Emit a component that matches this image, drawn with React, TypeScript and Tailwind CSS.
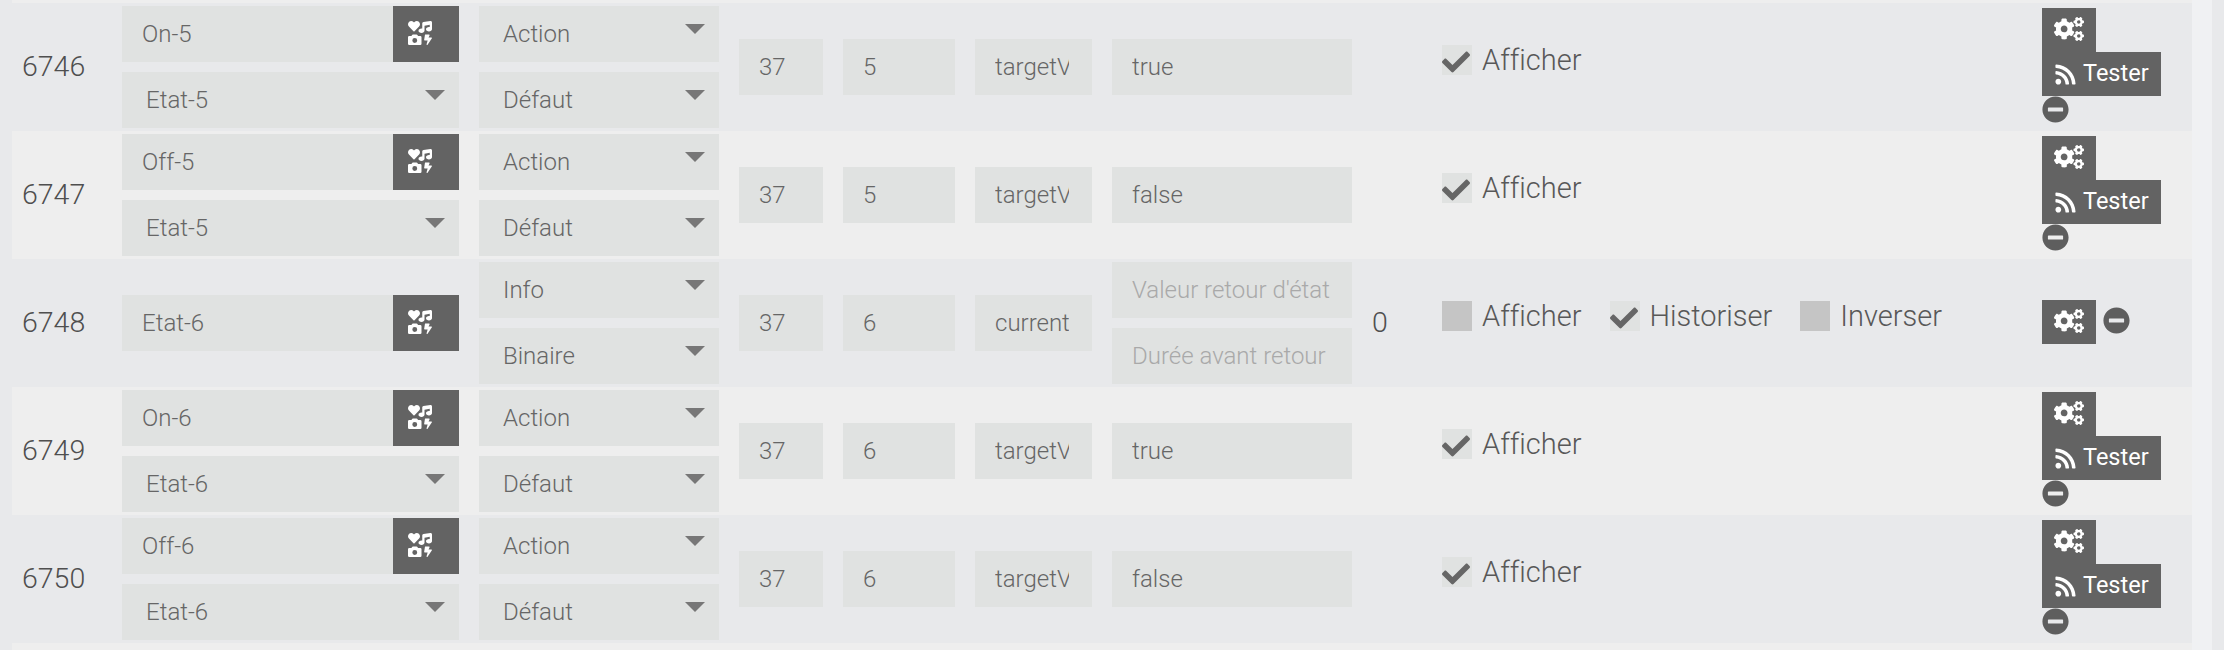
import { FaIcons, FaCogs, FaMinusCircle, FaCheck, FaRss } from 'react-icons/fa';

interface Cmd {
  id: number;
  name: string;
  state?: string;
  type: string;
  subType: string;
  node: string;
  instance: string;
  prop: string;
  value?: string;
  info?: boolean;
}

const cmds: Cmd[] = [
  { id: 6746, name: 'On-5', state: 'Etat-5', type: 'Action', subType: 'Défaut', node: '37', instance: '5', prop: 'targetValue', value: 'true' },
  { id: 6747, name: 'Off-5', state: 'Etat-5', type: 'Action', subType: 'Défaut', node: '37', instance: '5', prop: 'targetValue', value: 'false' },
  { id: 6748, name: 'Etat-6', type: 'Info', subType: 'Binaire', node: '37', instance: '6', prop: 'currentValue', info: true },
  { id: 6749, name: 'On-6', state: 'Etat-6', type: 'Action', subType: 'Défaut', node: '37', instance: '6', prop: 'targetValue', value: 'true' },
  { id: 6750, name: 'Off-6', state: 'Etat-6', type: 'Action', subType: 'Défaut', node: '37', instance: '6', prop: 'targetValue', value: 'false' },
];

function Field({ value, placeholder, className }: { value?: string; placeholder?: string; className: string }) {
  return (
    <input
      readOnly
      value={value ?? ''}
      placeholder={placeholder}
      className={`h-14 bg-[#e0e2e1] pl-5 text-2xl font-light text-[#666666] outline-none placeholder:text-[#a9a9a9] ${className}`}
    />
  );
}

function Select({ label, className }: { label: string; className: string }) {
  return (
    <div className={`relative flex h-14 items-center bg-[#e0e2e1] pl-6 text-2xl font-light text-[#666666] ${className}`}>
      {label}
      <svg viewBox="0 0 20 10" className="absolute right-3.5 top-[18px] h-2.5 w-5 fill-[#777777]">
        <path d="M0 0h20L10 10z" />
      </svg>
    </div>
  );
}

function NameField({ name }: { name: string }) {
  return (
    <div className="flex h-14 w-[337px]">
      <Field value={name} className="w-[271px] pr-5" />
      <button className="flex w-[66px] items-center justify-start bg-[#636363] pb-0.5 pl-[15px] text-white">
        <FaIcons size={24} />
      </button>
    </div>
  );
}

function Check({ label, checked }: { label: string; checked?: boolean }) {
  return (
    <label className="flex items-center gap-2.5 text-[29px] font-light leading-[30px] text-[#585858] [font-variant-ligatures:none]">
      <span className={`relative h-[30px] w-[30px] ${checked ? 'bg-[#e0e2e1]' : 'bg-[#c5c5c5]'}`}>
        {checked && <FaCheck size={28} className="absolute left-0 top-[3px] text-[#666666]" />}
      </span>
      {label}
    </label>
  );
}

function Row({ cmd, even }: { cmd: Cmd; even: boolean }) {
  return (
    <div className={`flex h-32 items-center gap-5 pl-2.5 ${even ? 'bg-[#e8e9eb]' : 'bg-[#eeeeee]'}`}>
      <div className="w-20 text-[28.5px] font-light text-[#4f4f4f]">{cmd.id}</div>
      {cmd.state ? (
        <div className="flex flex-col gap-2.5">
          <NameField name={cmd.name} />
          <Select label={cmd.state} className="w-[337px]" />
        </div>
      ) : (
        <NameField name={cmd.name} />
      )}
      <div className="flex flex-col gap-2.5">
        <Select label={cmd.type} className="w-60" />
        <Select label={cmd.subType} className="w-60" />
      </div>
      <Field value={cmd.node} className="w-[84px] pr-5" />
      <Field value={cmd.instance} className="w-28 pr-5" />
      <Field value={cmd.prop} className="w-[117px] pr-[23px]" />
      {cmd.info ? (
        <div className="flex flex-col gap-2.5">
          <Field placeholder="Valeur retour d'état" className="w-60 pr-5" />
          <Field placeholder="Durée avant retour" className="w-60 pr-5" />
        </div>
      ) : (
        <Field value={cmd.value} className="w-60 pr-5" />
      )}
      <div className="w-[50px] text-[28.5px] font-light text-[#4f4f4f]">{cmd.info ? '0' : ''}</div>
      <div className="flex w-[580px] gap-7 self-start pt-[42px]">
        <Check label="Afficher" checked={!cmd.info} />
        {cmd.info && <Check label="Historiser" checked />}
        {cmd.info && <Check label="Inverser" />}
      </div>
      {cmd.info ? (
        <div className="flex items-center gap-[7px] self-start pt-[41px]">
          <button className="flex h-11 w-[54px] items-center justify-center bg-[#636363] pb-0.5 text-white">
            <FaCogs size={30} />
          </button>
          <FaMinusCircle size={27} className="mb-1 text-[#5e5e5e]" />
        </div>
      ) : (
        <div className="flex flex-col items-start self-start pt-[5px]">
          <button className="flex h-11 w-[54px] items-center justify-center bg-[#636363] pb-0.5 text-white">
            <FaCogs size={30} />
          </button>
          <button className="flex h-11 w-[119px] items-center gap-1.5 bg-[#636363] pl-3 text-[23.5px] text-white">
            <FaRss size={23} />
            Tester
          </button>
          <FaMinusCircle size={27} className="text-[#5e5e5e]" />
        </div>
      )}
    </div>
  );
}

export default function App() {
  return (
    <div className="h-[650px] overflow-hidden bg-[#e8e9eb] font-['Roboto',sans-serif]">
      <div className="flex h-full">
        <div className="w-[2192px] pl-3">
          <div className="h-[3px] bg-[#eeeeee]" />
          {cmds.map((cmd, i) => (
            <Row key={cmd.id} cmd={cmd} even={i % 2 === 0} />
          ))}
          <div className="h-[7px] bg-[#eeeeee]" />
        </div>
        <div className="w-5 bg-[#f0f1f3]" />
        <div className="flex-1" />
      </div>
    </div>
  );
}
